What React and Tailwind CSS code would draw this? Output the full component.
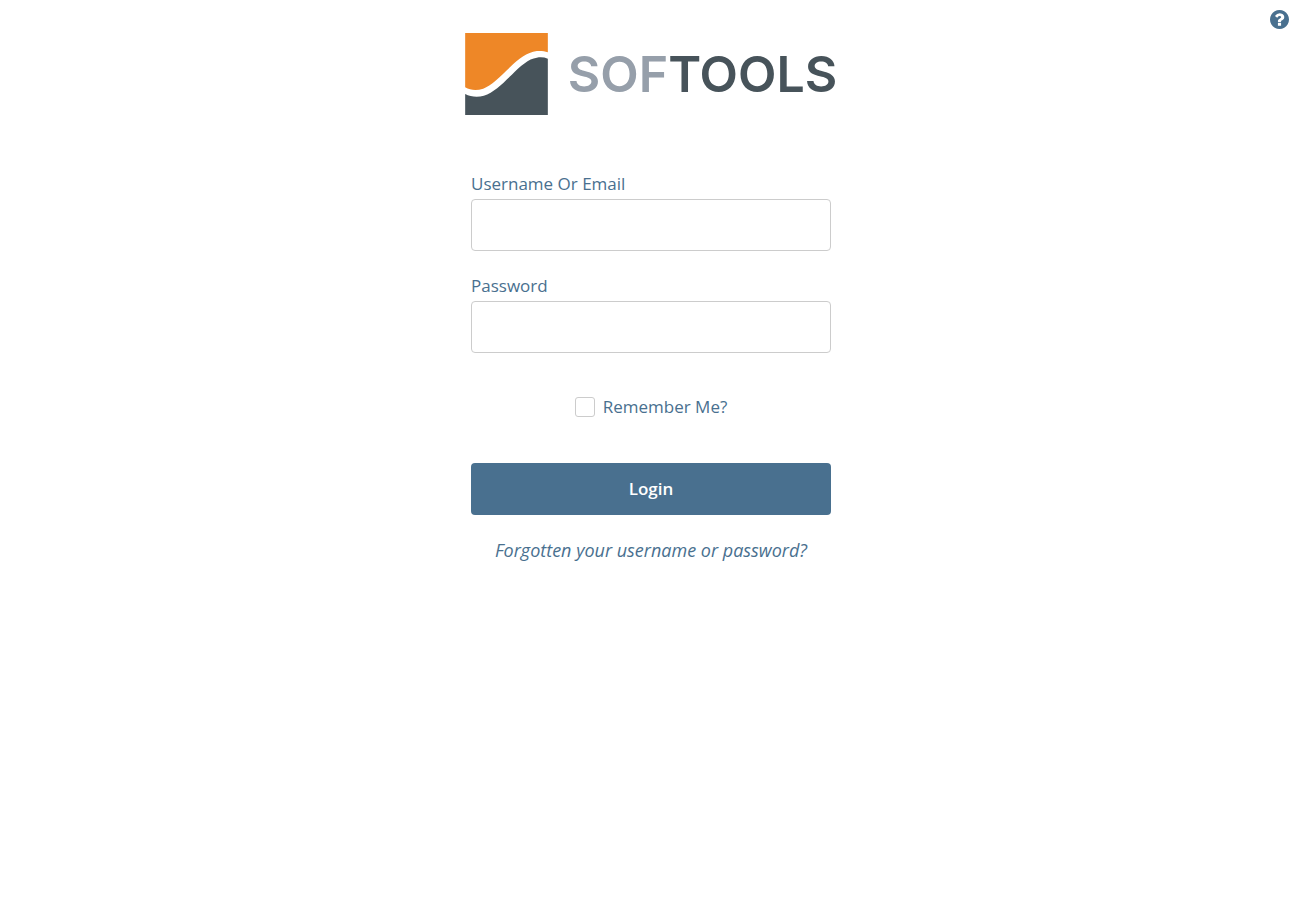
import React from "react";

function Logo() {
  return (
    <div className="flex items-center gap-5" role="img" aria-label="Softools">
      <svg viewBox="0 0 248 246" className="h-[82px] w-[83px] shrink-0" aria-hidden="true">
        <path
          fill="#ee8727"
          d="M0 0H248V58C238 54 226 53 215 54C185 58 160 78 135 102C105 131 78 158 54 167C34 174 16 172 0 163Z"
        />
        <path
          fill="#47535a"
          d="M0 183C16 191 36 194 56 188C86 179 112 152 140 125C166 99 190 77 215 74C227 72 238 73 248 77V246H0Z"
        />
      </svg>
      <span className="font-['Inter',sans-serif] text-[50px] leading-none font-semibold text-[#47535a]">
        <span className="text-[#969faa]">SOF</span>TOOLS
      </span>
    </div>
  );
}

function HelpIcon() {
  return (
    <svg viewBox="128 128 1536 1536" className="size-[19px]" fill="currentColor" aria-hidden="true">
      <path d="M1024 1376v-192q0-14-9-23t-23-9H800q-14 0-23 9t-9 23v192q0 14 9 23t23 9h192q14 0 23-9t9-23zm256-672q0-88-55.500-163T1086 425t-170-41q-243 0-371 213-15 24 8 42l132 100q7 6 19 6 16 0 25-12 53-68 86-92 34-24 86-24 48 0 85.500 26t37.500 59q0 38-20 61t-68 45q-63 28-115.500 86.500T768 1020v36q0 14 9 23t23 9h192q14 0 23-9t9-23q0-19 21.500-49.500T1099 957q32-18 49-28.500t46-35 44.500-48 28-60.500 12.500-81zm384 192q0 209-103 385.500T1281.500 1561 896 1664t-385.500-103T231 1281.500 128 896t103-385.500T510.500 231 896 128t385.500 103T1561 510.500 1664 896z" />
    </svg>
  );
}

function Field({ id, label, type, autoComplete }) {
  return (
    <div className="flex flex-col gap-[3px]">
      <label htmlFor={id} className="leading-6">
        {label}
      </label>
      <input
        id={id}
        name={id}
        type={type}
        autoComplete={autoComplete}
        className="h-[52px] w-full rounded border border-[#cccccc] bg-white px-3 outline-none focus:border-[#49708f]"
      />
    </div>
  );
}

export default function App() {
  return (
    <div className="relative min-h-screen bg-white font-['Open_Sans',sans-serif] text-[17px] text-[#49708f]">
      <a href="#help" aria-label="Help" className="absolute top-2.5 right-[13px]">
        <HelpIcon />
      </a>
      <main className="flex flex-col items-center pt-[33px]">
        <Logo />
        <form
          className="mt-[57px] flex w-full max-w-[360px] flex-col"
          onSubmit={(event) => event.preventDefault()}
        >
          <div className="flex flex-col gap-[23px]">
            <Field id="username" label="Username Or Email" type="text" autoComplete="username" />
            <Field id="password" label="Password" type="password" autoComplete="current-password" />
          </div>
          <label className="mt-[42px] flex items-center justify-center gap-2 leading-6">
            <input
              type="checkbox"
              name="remember"
              className="size-5 appearance-none rounded-[3px] border border-[#cccccc] bg-white checked:bg-[#49708f]"
            />
            Remember Me?
          </label>
          <button
            type="submit"
            className="mt-[44px] h-[52px] w-full rounded bg-[#49708f] font-semibold text-white"
          >
            Login
          </button>
          <a href="#forgotten" className="mt-[23px] text-center text-lg leading-6 italic">
            Forgotten your username or password?
          </a>
        </form>
      </main>
    </div>
  );
}
